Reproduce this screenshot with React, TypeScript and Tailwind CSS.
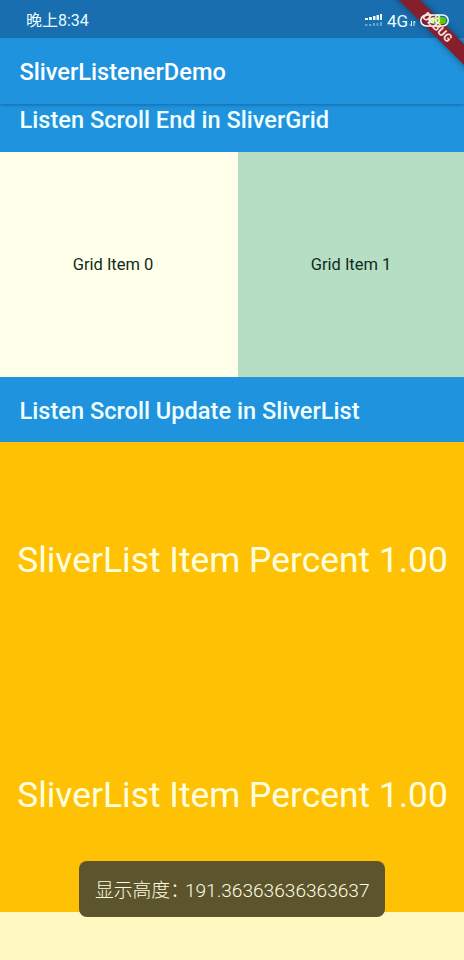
import React from "react";

function SectionTitle({ children }: { children: string }) {
  return (
    <span className="block whitespace-nowrap text-[23.6px] font-medium leading-7 text-[#f0ffff]">{children}</span>
  );
}

function ListItem() {
  return (
    <div className="flex h-[235px] shrink-0 items-center justify-center bg-[#ffc103] pl-px pt-0.5">
      <span className="whitespace-nowrap text-[35.4px] text-[#ffffe0]">SliverList Item Percent 1.00</span>
    </div>
  );
}

function StatusIcons() {
  return (
    <svg className="absolute left-[344px] top-0 z-30" width="120" height="38" viewBox="0 0 120 38">
      <g fill="#e8fbff">
        <rect x="21" y="18" width="3" height="2" />
        <rect x="25" y="17" width="3" height="3" />
        <rect x="29" y="16" width="2.500" height="4" />
        <rect x="32.500" y="15" width="2.500" height="5" />
        <rect x="36" y="14" width="2" height="6" />
      </g>
      <g fill="#8bc5de" opacity=".65">
        <rect x="21" y="24" width="2.500" height="2" />
        <rect x="25" y="24" width="2.500" height="2" />
        <rect x="29" y="23" width="2" height="3" />
        <rect x="32.500" y="23" width="2" height="3" />
        <rect x="36" y="22" width="2" height="4" />
      </g>
      <path d="M67.5 21v5m-1.500-1.500 1.500 1.500M70 26v-5m0 0 1.500 1.500" stroke="#d8f4ff" fill="none" />
      <rect x="86" y="17" width="16" height="7" rx="3" fill="#58c800" />
      <rect x="76.8" y="15" width="27.4" height="11" rx="5.5" fill="none" stroke="#f0ffff" strokeWidth="1.5" />
    </svg>
  );
}

export default function App() {
  return (
    <div className="relative flex h-[960px] w-[464px] flex-col overflow-hidden bg-[#fff8c0] font-['Roboto','Noto_Sans_CJK_SC',sans-serif]">
      <header className="relative z-10 shrink-0 bg-[#1f93dd] shadow-[0_1px_3px_rgba(0,40,90,0.4)]">
        <div className="h-[38px] bg-[#196eaf] pl-[26px] pt-[9px] text-[16px] leading-6 text-[#e8fbff]">晚上8:34</div>
        <div className="h-[66px] pl-[19.5px] pt-5">
          <span className="block text-[23.6px] font-medium leading-7 text-white">SliverListenerDemo</span>
        </div>
        <div className="absolute right-[-48px] top-[20px] z-20 h-[15px] w-[150px] rotate-45 bg-[#851f2c] shadow-[0_0_7px_rgba(0,0,0,0.4)]" />
        <StatusIcons />
        <span className="absolute left-[387px] top-[9px] text-[17px] leading-6 text-[#e8fbff]">4G</span>
        <span className="absolute left-[428px] top-[12px] z-30 text-[11px] font-medium leading-4 text-white">68</span>
        <div className="absolute right-[-48px] top-[20px] z-40 flex h-[15px] w-[150px] rotate-45 items-center justify-center text-[11.5px] font-bold text-[#ffe4e4]">DEBUG</div>
      </header>
      <div className="h-12 shrink-0 bg-[#1f93dd] pl-[19.5px] pt-0.5">
        <SectionTitle>Listen Scroll End in SliverGrid</SectionTitle>
      </div>
      <div className="grid h-[225px] shrink-0 grid-cols-[238px_226px] text-[16.5px] text-[#102b20]">
        <div className="flex items-center justify-center bg-[#ffffea] pr-3 pt-0.5">Grid Item 0</div>
        <div className="flex items-center justify-center bg-[#b6dec4] pt-0.5">Grid Item 1</div>
      </div>
      <div className="flex h-[65px] shrink-0 items-center bg-[#1f93dd] pl-[19.5px] pt-0.5">
        <SectionTitle>Listen Scroll Update in SliverList</SectionTitle>
      </div>
      <ListItem />
      <ListItem />
      <div className="absolute left-[79px] top-[861px] flex h-14 w-[306px] items-center rounded-lg bg-[#5c542c] pl-4 pt-1 font-light text-[#fffce0]">
        <span className="whitespace-nowrap text-[18.8px]">显示高度<span className="-mr-1">：</span><span className="text-[19.1px]">191.36363636363637</span></span>
      </div>
    </div>
  );
}
